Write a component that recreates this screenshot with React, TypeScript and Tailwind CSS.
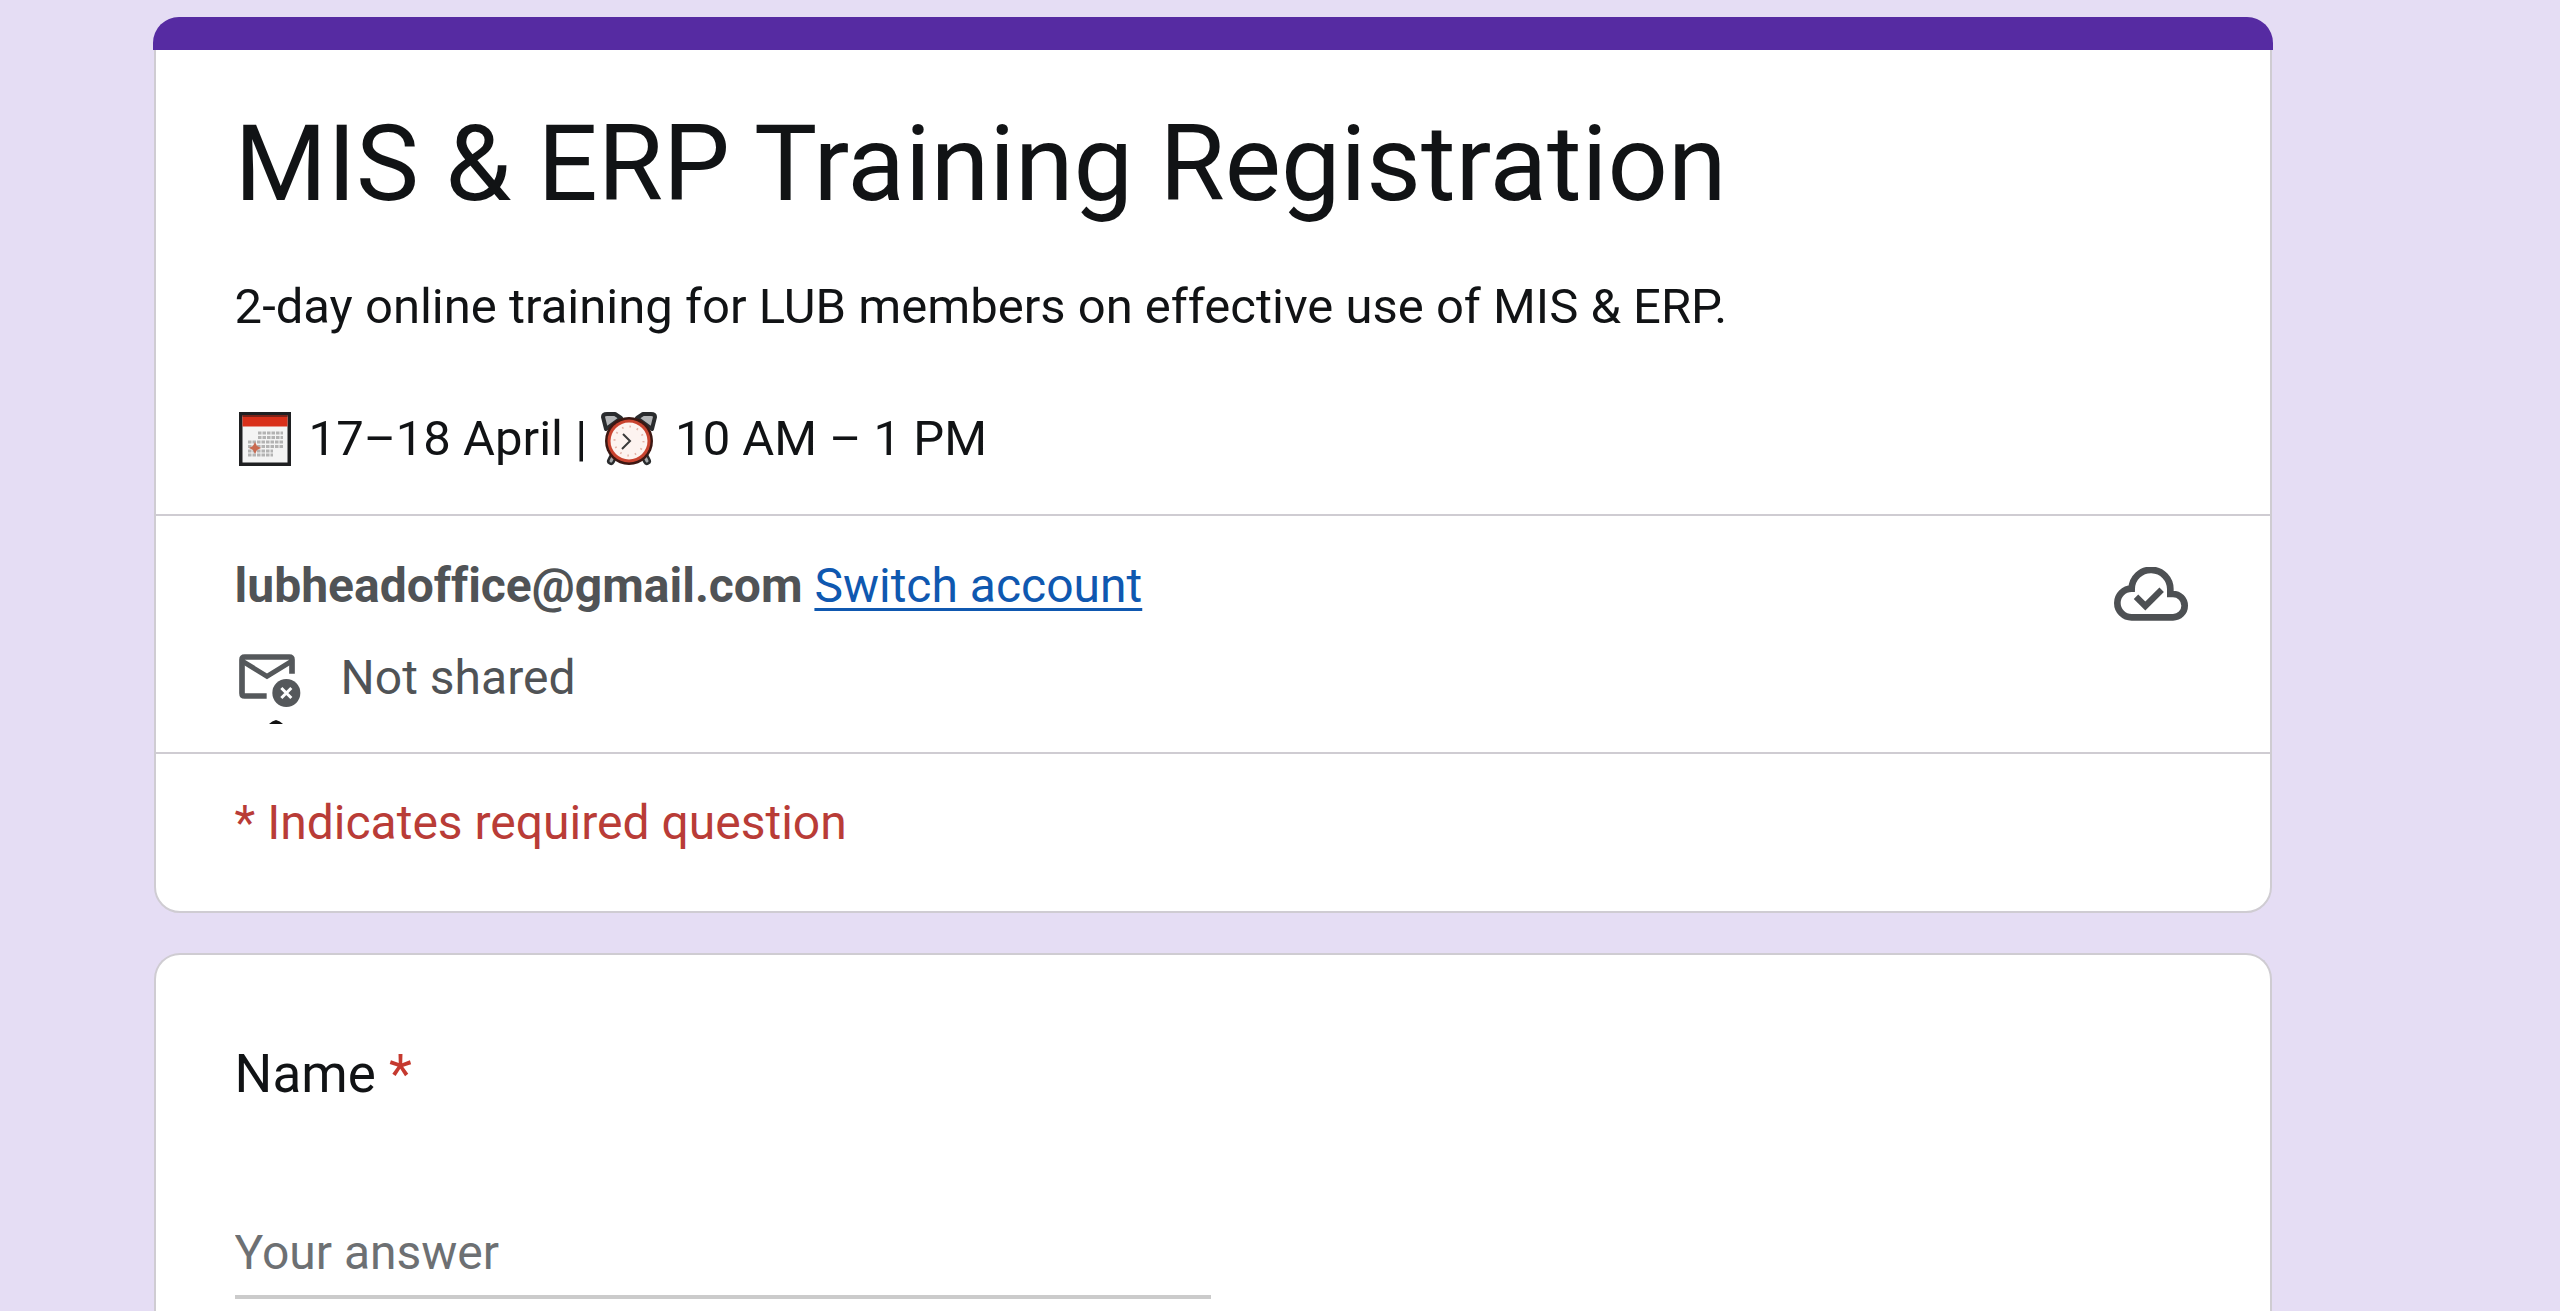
import { useState } from "react";

function CalendarIcon() {
  return (
    <svg viewBox="0 0 52 54" className="h-[54px] w-[52px]" role="img" aria-label="Calendar">
      <rect x="1.5" y="1.5" width="49" height="51" fill="#f4f4f4" stroke="#1f2022" strokeWidth="4" />
      <rect x="3.5" y="4" width="45" height="10.5" fill="#d9301a" />
      <rect x="3.5" y="3" width="45" height="2" fill="#7c2318" />
      <g stroke="#b3b3b3" strokeWidth="3" strokeDasharray="3.5 1">
        <path d="M19 21H44M19 25.5H44M9 30H44M9 34.5H44M9 39H34" />
        <path d="M9 43H34" />
      </g>
      <path d="M16 30l2 4 4 2-4 2-2 4-2-4-4-2 4-2z" fill="#c96a50" />
    </svg>
  );
}

function ClockIcon() {
  return (
    <svg viewBox="0 0 56 54" className="h-[54px] w-[56px]" role="img" aria-label="Alarm clock">
      <path d="M13 43l-3 6M43 43l3 6" stroke="#2a2c2e" strokeWidth="8" strokeLinecap="round" />
      <path d="M13 43l-3 6M43 43l3 6" stroke="#a5a8aa" strokeWidth="3" strokeLinecap="round" />
      <path d="M5 17L2 5q0-3 4-3h8l6 4z" fill="#b4b6b8" stroke="#2a2c2e" strokeWidth="4" strokeLinejoin="round" />
      <path d="M51 17l3-12q0-3-4-3h-8l-6 4z" fill="#b4b6b8" stroke="#2a2c2e" strokeWidth="4" strokeLinejoin="round" />
      <circle cx="28" cy="29" r="24" fill="#3c1712" />
      <circle cx="28" cy="29" r="21.5" fill="#c9432f" />
      <circle cx="28" cy="29" r="18.5" fill="#fdf3f0" />
      <circle cx="28" cy="29" r="14.5" fill="none" stroke="#e3b3a8" strokeWidth="2" strokeDasharray="1.5 6.1" />
      <path d="M22 22l7 7-8 8" fill="none" stroke="#3a3a3a" strokeWidth="2" />
    </svg>
  );
}

function CloudDoneIcon() {
  return (
    <svg viewBox="103 77 222 162" className="h-[54px] w-[74px]" fill="none" stroke="#4d5053" strokeWidth="20">
      <path d="M156 228A43 43 0 0 1 156 142A58 58 0 0 1 272 145V158H280A35 35 0 0 1 280 228Z" />
      <path d="M169 166L197 194L246 145" strokeWidth="19" />
    </svg>
  );
}

function MailOffIcon() {
  return (
    <svg viewBox="55 315 186 159" className="mt-1 h-[53px] w-[62px]" fill="none" stroke="#55585b" strokeWidth="17">
      <path d="M138 441H72Q64 441 64 433V332Q64 324 72 324H206Q214 324 214 332V374" />
      <path d="M66 337L139 382L212 337" strokeWidth="15" />
      <circle cx="197" cy="432" r="42" fill="#55585b" stroke="none" />
      <path d="M182 417L212 447M212 417L182 447" stroke="#fff" strokeWidth="9" />
    </svg>
  );
}

function FormHeader() {
  return (
    <header className="relative rounded-[26px] border-2 border-[#cfccd2] bg-white">
      <div className="-mx-[3px] -mt-0.5 h-[33px] rounded-t-[26px] bg-[#562ba2]" />
      <div className="pt-12 pr-[82px] pb-[42px] pl-[79px] text-[#111315]">
        <h1 className="text-[106px] leading-[132px]">MIS &amp; ERP Training Registration</h1>
        <p className="mt-11 text-[49px] leading-[66px]">
          2-day online training for LUB members on effective use of MIS &amp; ERP.
        </p>
        <p className="mt-[66px] flex items-center pl-1 text-[49px] leading-[66px]">
          <CalendarIcon />
          <span className="ml-[18px]">17–18 April |</span>
          <span className="ml-[14px] flex items-center gap-[18px]">
            <ClockIcon />
            <span>10 AM – 1 PM</span>
          </span>
        </p>
      </div>

      <section className="relative flex items-start justify-between border-t-2 border-[#cfccd2] pt-[37px] pr-[82px] pb-[41px] pl-[79px] text-[48px] leading-[66px] text-[#505356]">
        <div>
          <p className="[font-variant-ligatures:none]">
            <strong className="font-bold">lubheadoffice@gmail.com</strong>{" "}
            <a href="#switch" className="text-[#0f58b0] underline decoration-[3px] underline-offset-[6px]">
              Switch account
            </a>
          </p>
          <p className="mt-[26px] flex items-center gap-10 pl-1">
            <MailOffIcon />
            <span>Not shared</span>
          </p>
        </div>
        <div className="pt-[14px]">
          <CloudDoneIcon />
        </div>
        <svg viewBox="0 0 14 4" className="absolute bottom-7 left-[113px] h-1 w-[14px]" aria-hidden="true">
          <path d="M0 4Q3 1 7 0Q11 1 14 4Z" fill="#111" />
        </svg>
      </section>

      <p className="border-t-2 border-[#cfccd2] pt-9 pr-[82px] pb-[55px] pl-[79px] text-[48px] leading-[66px] text-[#b93c37]">
        * Indicates required question
      </p>
    </header>
  );
}

function NameQuestion() {
  const [name, setName] = useState("");

  return (
    <section className="flex-1 rounded-t-[26px] border-2 border-b-0 border-[#cfccd2] bg-white pt-[79px] pr-[82px] pl-[79px]">
      <label htmlFor="name" className="block text-[53px] leading-[80px] text-[#111315]">
        Name <span className="text-[#c5392f]">*</span>
      </label>
      <input
        id="name"
        type="text"
        required
        placeholder="Your answer"
        value={name}
        onChange={(e) => setName(e.target.value)}
        className="mt-[105px] block h-20 w-1/2 border-b-4 border-[#cbcbcb] pb-[10px] text-[48px] leading-[66px] text-[#111315] outline-none placeholder:text-[#6d7073]"
      />
    </section>
  );
}

export default function App() {
  return (
    <main className="flex min-h-screen flex-col gap-10 bg-[#e5ddf4] pt-[17px] pr-[11.25%] pl-[6%] font-['Roboto',sans-serif]">
      <FormHeader />
      <NameQuestion />
    </main>
  );
}
